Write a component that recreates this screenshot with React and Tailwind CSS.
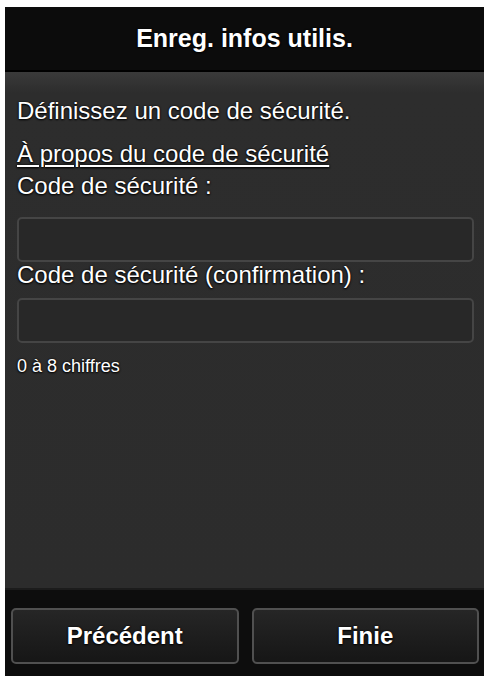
import React from 'react';

const shadow = '[text-shadow:0_0_2px_#000,0_1px_2px_#000]';

const Field = ({ className = '' }) => (
  <div className={`h-[45px] rounded-[5px] border-2 border-[#454545] bg-[#282828] ${className}`} />
);

const FooterButton = ({ children }) => (
  <button className="flex-1 h-[56px] rounded-[5px] border-2 border-[#505050] bg-gradient-to-b from-[#262626] to-[#161616] text-white font-bold text-[24px] [text-shadow:0_0_2px_#000,0_1px_2px_#000]">
    {children}
  </button>
);

export default function App() {
  return (
    <div className="w-[485px] h-[676px] bg-white pl-[5px] pt-[7px] pr-[1px] overflow-hidden" style={{ fontFamily: '"Liberation Sans", Arial, sans-serif' }}>
      <div className="flex flex-col h-full">
        {/* Header */}
        <div className="h-[65px] shrink-0 bg-[#0c0c0c] border-b-2 border-black flex items-center justify-center">
          <h1 className={`text-white font-bold text-[25px] leading-none ${shadow}`}>Enreg. infos utilis.</h1>
        </div>

        {/* Content */}
        <div className="flex-1 flex flex-col bg-[#2d2d2d] bg-gradient-to-b from-[#3a3a3a] via-[#2d2d2d] via-[4%] to-[#2c2c2c] pl-[12px] pr-[10px] pt-[27px] text-white text-[24px] leading-[24px] border-b-2 border-[#1c1c1c]">
          <p className={shadow}>Définissez un code de sécurité.</p>
          <a className={`mt-[19px] underline underline-offset-[3px] decoration-[1.5px] ${shadow}`}>À propos du code de sécurité</a>
          <p className={`mt-[8px] ${shadow}`}>Code de sécurité :</p>
          <Field className="mt-[19px]" />
          <p className={`mt-[1px] ${shadow}`}>Code de sécurité (confirmation) :</p>
          <Field className="mt-[11px]" />
          <p className={`mt-[13px] text-[18px] leading-[21px] ${shadow}`}>0 à 8 chiffres</p>
        </div>

        {/* Footer */}
        <div className="h-[86px] shrink-0 bg-[#0d0d0d] flex gap-[13px] pl-[6px] pr-[5px] pt-[18px]">
          <FooterButton>Précédent</FooterButton>
          <FooterButton>Finie</FooterButton>
        </div>
      </div>
    </div>
  );
}
